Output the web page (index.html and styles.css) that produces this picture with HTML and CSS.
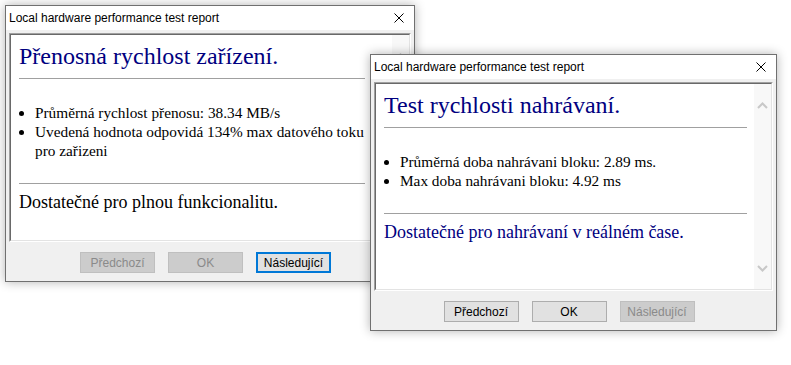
FILE: index.html
```html
<!DOCTYPE html>
<html lang="cs">
<head>
    <meta charset="UTF-8">
    <meta name="viewport" content="width=device-width, initial-scale=1.0">
    <title>Local hardware performance test report</title>
    <link rel="stylesheet" href="styles.css">
</head>
<body>
    <div class="desktop">
        <section class="window window-transfer">
            <header class="titlebar">
                <span class="title">Local hardware performance test report</span>
                <svg class="close" width="10" height="10" viewBox="0 0 10 10"><path d="M0.5 0.5 L9.5 9.5 M9.5 0.5 L0.5 9.5" stroke="#000" stroke-width="1"/></svg>
            </header>
            <div class="window-body">
                <div class="report">
                    <div class="report-frame">
                        <div class="report-view report-view-narrow">
                            <h1>Přenosná rychlost zařízení.</h1>
                            <div class="rule"></div>
                            <ul class="facts">
                                <li>Průměrná rychlost přenosu: 38.34 MB/s</li>
                                <li>Uvedená hodnota odpovidá 134% max datového toku pro zařizeni</li>
                            </ul>
                            <div class="rule rule-lower"></div>
                            <p class="verdict">Dostatečné pro plnou funkcionalitu.</p>
                        </div>
                        <div class="scrolltrack">
                            <svg width="11" height="7" viewBox="0 0 11 7"><path d="M1 6 L5.5 1.5 L10 6" fill="none" stroke="#c8c8c8" stroke-width="2"/></svg>
                            <svg width="11" height="7" viewBox="0 0 11 7"><path d="M1 1 L5.5 5.5 L10 1" fill="none" stroke="#c8c8c8" stroke-width="2"/></svg>
                        </div>
                    </div>
                </div>
                <div class="buttons">
                    <button disabled>Předchozí</button>
                    <button disabled>OK</button>
                    <button class="is-focused">Následující</button>
                </div>
            </div>
        </section>

        <section class="window window-upload">
            <header class="titlebar">
                <span class="title">Local hardware performance test report</span>
                <svg class="close" width="10" height="10" viewBox="0 0 10 10"><path d="M0.5 0.5 L9.5 9.5 M9.5 0.5 L0.5 9.5" stroke="#000" stroke-width="1"/></svg>
            </header>
            <div class="window-body">
                <div class="report">
                    <div class="report-frame">
                        <div class="report-view">
                            <h1>Test rychlosti nahrávaní.</h1>
                            <div class="rule"></div>
                            <ul class="facts">
                                <li>Průměrná doba nahrávani bloku: 2.89 ms.</li>
                                <li>Max doba nahrávani bloku: 4.92 ms</li>
                            </ul>
                            <div class="rule rule-lower"></div>
                            <p class="verdict verdict-ok">Dostatečné pro nahrávaní v reálném čase.</p>
                        </div>
                        <div class="scrolltrack">
                            <svg width="11" height="7" viewBox="0 0 11 7"><path d="M1 6 L5.5 1.5 L10 6" fill="none" stroke="#c8c8c8" stroke-width="2"/></svg>
                            <svg width="11" height="7" viewBox="0 0 11 7"><path d="M1 1 L5.5 5.5 L10 1" fill="none" stroke="#c8c8c8" stroke-width="2"/></svg>
                        </div>
                    </div>
                </div>
                <div class="buttons">
                    <button>Předchozí</button>
                    <button>OK</button>
                    <button disabled>Následující</button>
                </div>
            </div>
        </section>
    </div>
</body>
</html>
```

FILE: styles.css
```css
:root {
    --window-border: #707070;
    --face-color: #f0f0f0;
    --heading-color: #000080;
    --rule-color: #a0a0a0;
    --focus-color: #0078d7;
}

body {
    margin: 0;
    background: white;
    font-family: "Liberation Sans", Arial, sans-serif;
}

.desktop {
    position: relative;
    width: 791px;
    height: 365px;
    overflow: hidden;
}

/* windows sit on the desktop at their own place */
.window {
    position: absolute;
    height: 277px;
    box-sizing: border-box;
    border: 1px solid var(--window-border);
    background: var(--face-color);
    box-shadow: 0 0 10px rgba(0,0,0,0.3);
    display: flex;
    flex-direction: column;
}

.window-transfer {
    left: 5px;
    top: 5px;
    width: 410px;
}

.window-upload {
    left: 370px;
    top: 54px;
    width: 407px;
}

.titlebar {
    height: 24px;
    background: white;
    display: flex;
    align-items: center;
    justify-content: space-between;
    padding-left: 3px;
    font-size: 12px;
    color: #000;
}

.close {
    margin-right: 10px;
}

.window-body {
    flex: 1;
    padding: 3px 3px 0;
    display: flex;
    flex-direction: column;
}

.report {
    height: 209px;
    box-sizing: border-box;
    border: 1px solid;
    border-color: #a0a0a0 #ffffff #ffffff #a0a0a0;
}

.report-frame {
    height: 100%;
    box-sizing: border-box;
    border: 1px solid;
    border-color: #696969 #e3e3e3 #e3e3e3 #696969;
    background: white;
    display: flex;
}

.report-view {
    flex: 1;
    padding: 7px 7px 0 8px;
    font-family: "Liberation Serif", "Times New Roman", serif;
    color: #000;
}

.report-view-narrow {
    padding-right: 27px;
}

h1 {
    margin: 0;
    font-size: 24px;
    line-height: 28px;
    font-weight: normal;
    color: var(--heading-color);
    white-space: nowrap;
}

.rule {
    height: 1px;
    background: var(--rule-color);
    margin-top: 8px;
}

.rule-lower {
    margin-top: 23px;
}

.facts {
    margin: 24px 0 0;
    padding-left: 16px;
    font-size: 15.3px;
    line-height: 19px;
}

.verdict {
    margin: 7px 0 0;
    font-size: 18px;
    line-height: 22px;
}

.verdict-ok {
    color: var(--heading-color);
}

.scrolltrack {
    width: 17px;
    background: #f8f8f8;
    display: flex;
    flex-direction: column;
    align-items: center;
    justify-content: space-between;
    padding: 18px 0 17px;
}

.buttons {
    display: flex;
    justify-content: center;
    gap: 13px;
    padding: 10px 9px 0 0;
}

.buttons button {
    width: 75px;
    height: 21px;
    padding: 0;
    font-family: "Liberation Sans", Arial, sans-serif;
    font-size: 12px;
    color: #000;
    background: #e1e1e1;
    border: 1px solid #adadad;
}

.buttons button:disabled {
    background: #cccccc;
    border-color: #bfbfbf;
    color: #8a8a8a;
}

.buttons .is-focused {
    border: 2px solid var(--focus-color);
}
```
